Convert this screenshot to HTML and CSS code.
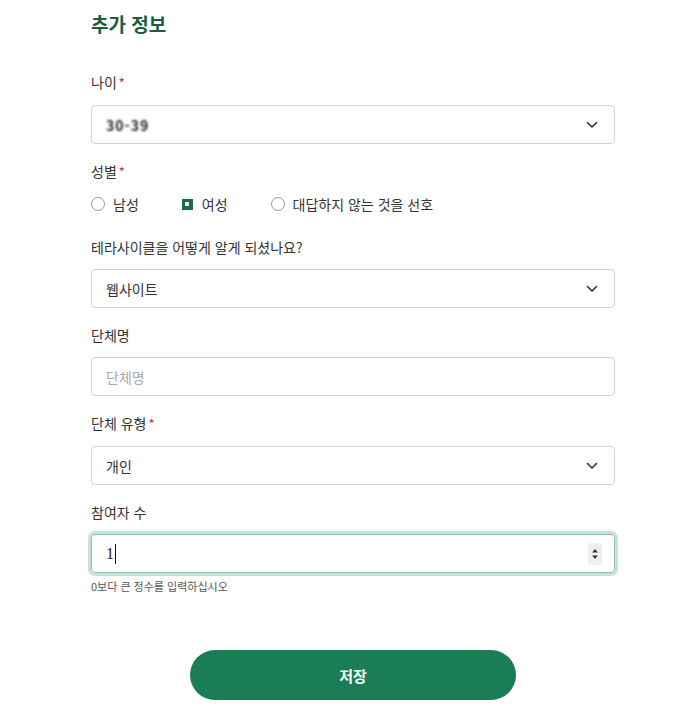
FILE: index.html
```html
<!DOCTYPE html>
<html lang="ko">
<head>
<meta charset="utf-8">
<link rel="stylesheet" href="styles.css">
</head>
<body>
<form class="form">
  <h2 class="title">추가 정보</h2>

  <div class="group">
    <div class="label">나이<span class="req">*</span></div>
    <div class="box select">
      <span class="blurred">30-39</span>
      <svg class="chev" width="12" height="8" viewBox="0 0 12 8"><path d="M1.5 1.5 6 6l4.5-4.5" fill="none" stroke="#333" stroke-width="1.6" stroke-linecap="round" stroke-linejoin="round"/></svg>
    </div>
  </div>

  <div class="group">
    <div class="label">성별<span class="req">*</span></div>
    <div class="radios">
      <label class="radio"><span class="dot"></span>남성</label>
      <label class="radio"><span class="dot checked"><span class="inner"></span></span>여성</label>
      <label class="radio"><span class="dot"></span>대답하지 않는 것을 선호</label>
    </div>
  </div>

  <div class="group radios-after">
    <div class="label">테라사이클을 어떻게 알게 되셨나요?</div>
    <div class="box select">
      <span>웹사이트</span>
      <svg class="chev" width="12" height="8" viewBox="0 0 12 8"><path d="M1.5 1.5 6 6l4.5-4.5" fill="none" stroke="#333" stroke-width="1.6" stroke-linecap="round" stroke-linejoin="round"/></svg>
    </div>
  </div>

  <div class="group">
    <div class="label">단체명</div>
    <div class="box"><span class="placeholder">단체명</span></div>
  </div>

  <div class="group">
    <div class="label">단체 유형<span class="req">*</span></div>
    <div class="box select">
      <span>개인</span>
      <svg class="chev" width="12" height="8" viewBox="0 0 12 8"><path d="M1.5 1.5 6 6l4.5-4.5" fill="none" stroke="#333" stroke-width="1.6" stroke-linecap="round" stroke-linejoin="round"/></svg>
    </div>
  </div>

  <div class="group last">
    <div class="label">참여자 수</div>
    <div class="box focused">
      <span class="value">1<span class="caret"></span></span>
      <span class="spin">
        <svg width="8" height="14" viewBox="0 0 8 14"><path d="M4 2 7 5.5H1z" fill="#333"/><path d="M4 12 1 8.5h6z" fill="#333"/></svg>
      </span>
    </div>
    <div class="help">0보다 큰 정수를 입력하십시오</div>
  </div>

  <div class="actions">
    <button type="button" class="save">저장</button>
  </div>
</form>
</body>
</html>
```

FILE: styles.css
```css
* { box-sizing: border-box; }
html, body { margin: 0; background: #fff; }
body {
  font-family: "Noto Sans CJK KR", "Liberation Sans", sans-serif;
  color: #333;
}
.form {
  width: 524px;
  margin-left: 91px;
  padding-top: 10px;
}
.title {
  margin: 0 0 34px;
  font-size: 19px;
  line-height: 28px;
  font-weight: 700;
  color: #1e5b3d;
}
.group { margin-bottom: 17px; }
.group.radios-after { margin-top: 23px; }
.group.last { margin-bottom: 0; }
.label {
  font-size: 14px;
  line-height: 20px;
  margin-bottom: 12px;
  color: #333;
}
.req { color: #c0392b; margin-left: 2px; font-size: 13px; }
.box {
  height: 39px;
  border: 1px solid #d3d3d3;
  border-radius: 4px;
  display: flex;
  align-items: center;
  padding: 0 14px;
  font-size: 14px;
  color: #333;
}
.select { justify-content: space-between; }
.chev { margin-right: 2px; }
.blurred {
  filter: blur(1.2px);
  color: #222;
  font-weight: 700;
  font-size: 14px;
  letter-spacing: 1px;
}
.placeholder { color: #a8a8a8; }
.radios {
  display: flex;
  gap: 43px;
  font-size: 14px;
  line-height: 20px;
}
.radio { display: flex; align-items: center; color: #333; }
.dot {
  width: 14px;
  height: 14px;
  border: 1px solid #9a9a9a;
  border-radius: 50%;
  margin-right: 8px;
  flex: none;
}
.dot.checked {
  width: 11px;
  height: 11px;
  border: none;
  border-radius: 0;
  background: #1d6b46;
  margin-right: 9px;
  display: flex;
  align-items: center;
  justify-content: center;
}
.dot.checked .inner {
  width: 4px;
  height: 4px;
  background: #e8f2ec;
}
.focused {
  border-color: #8fc0a9;
  box-shadow: 0 0 0 3px #c8e2d6;
  justify-content: space-between;
  font-family: "Liberation Serif", serif;
  font-size: 16px;
}
.value { display: flex; align-items: center; color: #222; }
.caret {
  display: inline-block;
  width: 1px;
  height: 20px;
  background: #111;
  margin-left: 1px;
}
.spin {
  display: flex;
  align-items: center;
  justify-content: center;
  width: 14px;
  height: 22px;
  background: #efefef;
  border-radius: 2px;
  margin-right: -2px;
}
.help {
  margin-top: 6px;
  font-size: 11px;
  line-height: 14px;
  color: #555;
}
.actions {
  display: flex;
  justify-content: center;
  margin-top: 57px;
}
.save {
  width: 326px;
  height: 50px;
  border: none;
  border-radius: 25px;
  background: #1b7d56;
  color: #fff;
  font-family: "Noto Sans CJK KR", sans-serif;
  font-size: 15px;
  font-weight: 700;
}
```
